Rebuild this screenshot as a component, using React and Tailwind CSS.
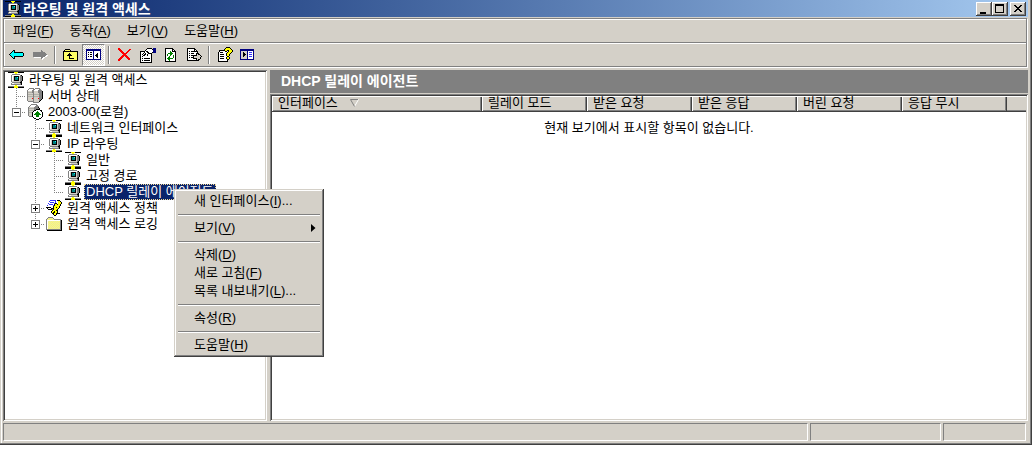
import React from "react";

const INK = {
  k: "#000000", d: "#606060", g: "#808080", s: "#b0b0a8", l: "#d4d0c8", w: "#ffffff",
  y: "#ffff00", o: "#ffff66", p: "#e8e4b0", t: "#008080", c: "#00ffff", r: "#ff0000", n: "#008000",
  b: "#000080", u: "#6688cc", m: "#3333ff",
};

const ICONS = {
  network: [
    "kkkkkkyyyykkkkkk",
    ".......yy.......",
    "....gggggggg....",
    "...gwwwwwwwwgk..",
    "...gwlkkkkklggk.",
    "...gwlkttcklggk.",
    "...gwlktttklggk.",
    "...gwlktttklggk.",
    "...gwlkkkkklggk.",
    "...gllllllllgk..",
    "....ggggggggkk..",
    "...gwwllllllgk..",
    "...ggggggggggk..",
    ".......yy.......",
    "ggggggyyyygggggg",
    "kkkkkkyyyykkkkkk",
  ],
  servers: [
    "..ggggg.ggggg...",
    ".gwwwwggwwwwgg..",
    "gwwwwggwwwwgggg.",
    "gllllggllllggggk",
    "gssssggllllggggk",
    "glllllglllllgggk",
    "gsssssgsssssgggk",
    "glllllglllllgggk",
    "gsssssgsssssgggk",
    "glllllglllllgggk",
    "gllllrgllllrgggk",
    "glllllglllllggk.",
    "glllllglllllgk..",
    ".gggggglllllk...",
    "......gggggg....",
    "................",
  ],
  server: [
    "....gggggg......",
    "...gwwwwwgg.....",
    "..gwwwwwgggg....",
    ".glllllggggk....",
    ".gsssssgggggk...",
    ".glllllggkkkk...",
    ".gssssskkwwwwkk.",
    ".gllllkwwwnwwwk.",
    ".gssskwwwnnnwwwk",
    ".glllkwwnnnnnwwk",
    ".glllkwnnnnnnnwk",
    ".glllkwwwnnnwwwk",
    "..gggkwwwnnnwwwk",
    "......kwwwwwwwk.",
    ".......kkwwwkk..",
    ".........kkk....",
  ],
  policy: [
    "....mmmmmm.kkk..",
    "...mwwwwwm..yyk.",
    "...wmmmmwm..yyyk",
    "..mwwwwwmkk.yyyk",
    "..wmmmmwkyykyyk.",
    ".mwwwwwmkyyyyyk.",
    ".wwwwwwkyyyyyk..",
    "kkkkkwwkyykyyk..",
    ".kwwwkkkyyyyk...",
    "..kkkkgkyyyk....",
    "......kyyykk....",
    ".....kyykyyk....",
    ".....kykkyyk....",
    "......kkyykkkk..",
    ".......kyyk.....",
    "........kk......",
  ],
  folder: [
    "................",
    "..ggggg.........",
    ".gpopopg........",
    "gpopopopggggggg.",
    "gwwwwwwwwwwwwwgk",
    "gwpopopopopopogk",
    "gwopopopopopopgk",
    "gwpopopopopopogk",
    "gwopopopopopopgk",
    "gwpopopopopopogk",
    "gwopopopopopopgk",
    "gwpopopopopopogk",
    "gwopopopopopopgk",
    "gggggggggggggggk",
    ".kkkkkkkkkkkkkkk",
    "................",
  ],
  back: [
    "................",
    "................",
    "................",
    "....kk..........",
    "...kck..........",
    "..kcckkkkkkkkk..",
    ".kcccccccccccck.",
    "kccccccccccccck.",
    ".kcccccccccccck.",
    "..kcckkkkkkkkk..",
    "...kck..........",
    "....kk..........",
    "................",
    "................",
    "................",
    "................",
  ],
  forward: [
    "................",
    "................",
    "................",
    ".........g......",
    ".........gg.....",
    ".gggggggggggg...",
    ".ggggggggggggg..",
    ".gggggggggggggg.",
    ".gggggggggggggww",
    ".ggggggggggggww.",
    "..wwwwwwwggww...",
    ".........gww....",
    "..........w.....",
    "................",
    "................",
    "................",
  ],
  up: [
    "................",
    "................",
    "..kkkkk.........",
    ".koooook........",
    "kkkkkkkkkkkkkkk.",
    "koooooooooooook.",
    "koooookoooooook.",
    "kooookkkooooook.",
    "koookkkkkoooook.",
    "koooookoooooook.",
    "koooookoooooook.",
    "koooookkkkkoook.",
    "koooooooooooook.",
    "kkkkkkkkkkkkkkk.",
    "................",
    "................",
  ],
  tree: [
    "................",
    "................",
    "bbbbbbbbbbbbbbb.",
    "bbbbbbbbbbbbbbb.",
    "bwwwwwwbwwwwwwb.",
    "bwkwkkwbwwwwwwb.",
    "bwwwwwwbwwwkwwb.",
    "bwkwkkwbwwkkwwb.",
    "bwwwwwwbwkkkwwb.",
    "bwkwkkwbwwkkwwb.",
    "bwwwwwwbwwwkwwb.",
    "bwwwwwwbwwwwwwb.",
    "bbbbbbbbbbbbbbb.",
    "................",
    "................",
    "................",
  ],
  action: [
    "................",
    "................",
    "bbbbbbbbbbbbbb..",
    "bbbbbbbbbbbbbb..",
    "bllllllbwwwwwb..",
    "bllklllbwmmmwb..",
    "bllkkllbwwwwwb..",
    "bllkkklbwmmmwb..",
    "bllkkllbwwwwwb..",
    "bllklllbwmmmwb..",
    "bllllllbwwwwwb..",
    "bllllllbwwwwwb..",
    "bbbbbbbbbbbbbb..",
    "................",
    "................",
    "................",
  ],
  remove: [
    "................",
    ".rr.............",
    ".rrr........rr..",
    "..rrr......rr...",
    "...rrr....rr....",
    "....rrr..rr.....",
    ".....rrrrr......",
    "......rrr.......",
    ".....rrrrr......",
    "....rrr.rrr.....",
    "...rrr...rrr....",
    "..rrr.....rrr...",
    ".rrr.......rr...",
    ".rr.............",
    "................",
    "................",
  ],
  props: [
    "................",
    ".......kkkkk.bbb",
    "......kwwwwwkbbb",
    ".....kwwwwwwwbbb",
    "kkkkkwkkwwwwwbbb",
    "kwwwkwwkkwwwkbbb",
    "kwwkwkwwkkkk....",
    "kwkwkkwkwwwk....",
    "kwwkkwwkwwwk....",
    "kwkwwwwwwwwk....",
    "kwwwwwwwwwwk....",
    "kwkwkkkkkkwk....",
    "kwwwwwwwwwwk....",
    "kwkwkkkkkkwk....",
    "kwwwwwwwwwwk....",
    "kkkkkkkkkkkk....",
  ],
  refresh: [
    "................",
    "..kkkkkkkk......",
    "..kwwwwwwkk.....",
    "..kwwwwwwkwk....",
    "..kwwwwnwkkkk...",
    "..kwwwwnnwwwk...",
    "..kwwnnnnnwwk...",
    "..kwnwwnnwwwk...",
    "..kwnwwnwwnwk...",
    "..kwwwnwwwnwk...",
    "..kwwnnwwwnwk...",
    "..kwnnnnnnwwk...",
    "..kwwnnwwwwwk...",
    "..kwwwnwwwwwk...",
    "..kkkkkkkkkkk...",
    "................",
  ],
  export: [
    "................",
    ".kkkkkkkk.......",
    ".kwwwwwwkk......",
    ".kwwwwwwkwk.....",
    ".kwkwkkkkkkk....",
    ".kwwwwwwwwwk....",
    ".kwkwkkkwwkkk...",
    ".kwwwwwwwwklkk..",
    ".kwkwkkkkkklllk.",
    ".kwwwwwklllllllk",
    ".kwkwkkkllllllk.",
    ".kwwwwwkkkklllk.",
    ".kwwwwwwwwklkk..",
    ".kkkkkkkkkkkk...",
    "................",
    "................",
  ],
  help: [
    ".........kkkk...",
    "........kyyyyk..",
    ".......kyyyyyyk.",
    "..kkkkkkyykkyyyk",
    "..kwwwwwkkwkyyyk",
    ".kwkkkwwwwkyyyk.",
    ".kwwwwwwwkyyyk..",
    ".kwkkkkwwkyyk...",
    ".kwwwwwwwkyyk...",
    ".kwkkkkwwwkk....",
    ".kwwwwwwwkyyk...",
    ".kwkkkkwwkyyk...",
    ".kwwwwwwwwkk....",
    ".kwwwwwwwwk.....",
    ".kkkkkkkkkk.....",
    "................",
  ],
};

function PixelIcon({ name }) {
  const marks = [];
  ICONS[name].forEach((line, y) => {
    let x = 0;
    while (x < line.length) {
      let end = x + 1;
      while (end < line.length && line[end] === line[x]) end++;
      if (INK[line[x]]) {
        marks.push(<rect key={`${x}-${y}`} x={x} y={y} width={end - x} height="1" fill={INK[line[x]]} />);
      }
      x = end;
    }
  });
  return (
    <svg viewBox="0 0 16 16" className="block h-4 w-4 shrink-0" shapeRendering="crispEdges" aria-hidden="true">
      {marks}
    </svg>
  );
}

/* One 19px column of the tree: none, line, tee, end, with an optional plus/minus box. */
function Branch({ kind }) {
  const [shape, box] = kind.split(":");
  const dots = { stroke: "#808080", strokeWidth: 1, strokeDasharray: "1 1" };
  return (
    <svg viewBox="0 0 19 16" className="block h-4 w-[19px] shrink-0" shapeRendering="crispEdges" aria-hidden="true">
      {(shape === "line" || shape === "tee") && <path d="M9.5 0V16" {...dots} />}
      {shape === "end" && <path d="M9.5 0V8" {...dots} />}
      {(shape === "tee" || shape === "end") && <path d="M9 8.5H19" {...dots} />}
      {box && (
        <>
          <rect x="5.5" y="4.5" width="8" height="8" fill="#fff" stroke="#808080" />
          <path d={box === "plus" ? "M7 8.5H12M9.5 6V11" : "M7 8.5H12"} stroke="#000" />
        </>
      )}
    </svg>
  );
}

const TREE = [
  { branches: [], icon: "network", label: "라우팅 및 원격 액세스" },
  { branches: ["tee"], icon: "servers", label: "서버 상태" },
  { branches: ["end:minus"], icon: "server", label: "2003-00(로컬)" },
  { branches: ["none", "tee"], icon: "network", label: "네트워크 인터페이스" },
  { branches: ["none", "tee:minus"], icon: "network", label: "IP 라우팅" },
  { branches: ["none", "line", "tee"], icon: "network", label: "일반" },
  { branches: ["none", "line", "tee"], icon: "network", label: "고정 경로" },
  { branches: ["none", "line", "end"], icon: "network", label: "DHCP 릴레이 에이전트", selected: true },
  { branches: ["none", "tee:plus"], icon: "policy", label: "원격 액세스 정책" },
  { branches: ["none", "end:plus"], icon: "folder", label: "원격 액세스 로깅" },
];

const MENUS = [["파일", "F"], ["동작", "A"], ["보기", "V"], ["도움말", "H"]];

const TOOLS = [
  [["back", "뒤로"], ["forward", "앞으로"]],
  [["up", "한 수준 위로"], ["tree", "콘솔 트리 표시"]],
  [["remove", "삭제"], ["props", "속성"], ["refresh", "새로 고침"], ["export", "목록 내보내기"]],
  [["help", "도움말"], ["action", "작업 창 표시"]],
];

const CONTEXT = [
  [["새 인터페이스", "I", "..."]],
  [["보기", "V", "", true]],
  [["삭제", "D", ""], ["새로 고침", "F", ""], ["목록 내보내기", "L", "..."]],
  [["속성", "R", ""]],
  [["도움말", "H", ""]],
];

const COLUMNS = ["릴레이 모드", "받은 요청", "받은 응답", "버린 요청", "응답 무시"];

const SUNKEN =
  "bg-white p-0.5 shadow-[inset_1px_1px_#808080,inset_-1px_-1px_#fff,inset_2px_2px_#404040,inset_-2px_-2px_#d4d0c8]";
const CAPTION_BUTTON =
  "flex h-[14px] w-4 items-center justify-center bg-[#d4d0c8] shadow-[inset_-1px_-1px_#404040,inset_1px_1px_#fff,inset_-2px_-2px_#808080]";
const HEAD =
  "h-4 bg-[#d4d0c8] p-0 pl-1.5 text-left align-top font-normal leading-[14px] shadow-[inset_0_-1px_#404040,inset_1px_1px_#fff,inset_-1px_0_#404040,inset_-2px_-2px_#808080]";
const STATUS = "h-[18px] border border-[#808080] border-r-white border-b-white";

function Hotkey({ text, letter, tail }) {
  return (
    <span>
      {text}(<span className="underline underline-offset-2">{letter}</span>){tail}
    </span>
  );
}

function TitleBar() {
  return (
    <header className="flex h-[17px] items-center bg-linear-to-r from-[#0a246a] to-[#a6caf0] pr-0.5 pl-0.5 text-white">
      <PixelIcon name="network" />
      <h1 className="ml-0.5 flex-1 text-[14px] leading-4 font-bold whitespace-nowrap">라우팅 및 원격 액세스</h1>
      <div className="flex text-black">
        <button className={CAPTION_BUTTON} aria-label="최소화">
          <svg viewBox="0 0 16 14" className="h-[14px] w-4" shapeRendering="crispEdges"><path d="M4 10h6v2H4z" /></svg>
        </button>
        <button className={CAPTION_BUTTON} aria-label="최대화">
          <svg viewBox="0 0 16 14" className="h-[14px] w-4" shapeRendering="crispEdges">
            <path fillRule="evenodd" d="M3 2h9v9H3zM4 4v6h7V4z" />
          </svg>
        </button>
        <button className={`${CAPTION_BUTTON} ml-0.5`} aria-label="닫기">
          <svg viewBox="0 0 16 14" className="h-[14px] w-4" shapeRendering="crispEdges">
            <path d="M4 3h2v1h1v1h2v-1h1v-1h2v1h-1v1h-1v1h-1v1h1v1h1v1h1v1h-2v-1h-1v-1H7v1H6v1H4v-1h1v-1h1v-1h1v-1H6v-1H5v-1H4z" />
          </svg>
        </button>
      </div>
    </header>
  );
}

function Toolbar() {
  return (
    <div role="toolbar" className="flex h-[22px] items-center">
      {TOOLS.map((group, i) => (
        <React.Fragment key={i}>
          {i > 0 && <span className="mx-[3px] h-[18px] w-0.5 border-l border-[#808080] bg-white" />}
          {group.map(([icon, label]) => (
            <button
              key={icon}
              aria-label={label}
              className={`flex h-[22px] w-[23px] items-center justify-center ${
                icon === "tree"
                  ? "border border-[#808080] border-r-white border-b-white bg-[conic-gradient(#fff_25%,#d4d0c8_0_50%,#fff_0_75%,#d4d0c8_0)] bg-[length:2px_2px]"
                  : ""
              }`}
            >
              <PixelIcon name={icon} />
            </button>
          ))}
        </React.Fragment>
      ))}
    </div>
  );
}

function ConsoleTree() {
  return (
    <nav className={`w-[264px] shrink-0 overflow-hidden ${SUNKEN}`}>
      <ul role="tree" className="pl-0.5">
        {TREE.map((node) => (
          <li
            key={node.label}
            role="treeitem"
            aria-level={node.branches.length + 1}
            aria-selected={Boolean(node.selected)}
            className="flex h-4 items-center"
          >
            {node.branches.map((kind, i) => <Branch key={i} kind={kind} />)}
            <span className="ml-px"><PixelIcon name={node.icon} /></span>
            <span
              className={`ml-[3px] h-4 border px-px leading-[14px] whitespace-nowrap ${
                node.selected ? "border-dotted border-[#f5db95] bg-[#0a246a] text-white" : "border-transparent"
              }`}
            >
              {node.label}
            </span>
          </li>
        ))}
      </ul>
    </nav>
  );
}

function ResultPane() {
  return (
    <main className="flex min-w-0 flex-1 flex-col">
      <h2 className="h-[23px] bg-[#808080] pl-[11px] text-[14px] leading-[23px] font-bold text-white">
        DHCP 릴레이 에이전트
      </h2>
      <div className={`mt-px flex-1 ${SUNKEN}`}>
        <table className="w-full table-fixed border-separate border-spacing-0">
          <thead>
            <tr>
              <th className={`${HEAD} w-[210px]`}>
                <span className="flex items-center gap-3">
                  인터페이스
                  <svg viewBox="0 0 9 8" className="h-2 w-[9px]" aria-hidden="true">
                    <path d="M8.5 .5L4.5 7.5" stroke="#fff" />
                    <path d="M8 .5H.5L4.5 7.5" stroke="#808080" fill="none" />
                  </svg>
                </span>
              </th>
              {COLUMNS.map((name) => (
                <th key={name} className={`${HEAD} w-[105px]`}>{name}</th>
              ))}
              <th className="bg-[#d4d0c8] p-0 shadow-[inset_0_-1px_#404040,inset_0_1px_#fff,inset_0_-2px_#808080]" />
            </tr>
          </thead>
          <tbody>
            <tr>
              <td colSpan={7} className="p-0 pt-2 text-center leading-4">현재 보기에서 표시할 항목이 없습니다.</td>
            </tr>
          </tbody>
        </table>
      </div>
    </main>
  );
}

function ContextMenu() {
  return (
    <div
      role="menu"
      className="absolute top-[189px] left-[174px] w-[150px] bg-[#d4d0c8] p-[3px] shadow-[inset_-1px_-1px_#404040,inset_1px_1px_#d4d0c8,inset_-2px_-2px_#808080,inset_2px_2px_#fff]"
    >
      {CONTEXT.map((group, i) => (
        <React.Fragment key={i}>
          {i > 0 && (
            <div role="separator" className="flex h-[9px] flex-col justify-center px-px">
              <div className="h-0.5 border-t border-[#808080] bg-white" />
            </div>
          )}
          {group.map(([text, letter, tail, more]) => (
            <button
              key={text}
              role="menuitem"
              className="flex h-[18px] w-full items-center justify-between pr-[5px] pl-[17px] leading-[18px] whitespace-nowrap"
            >
              <Hotkey text={text} letter={letter} tail={tail} />
              {more && (
                <svg viewBox="0 0 5 8" className="h-2 w-[5px]" aria-hidden="true"><path d="M0 0L4.5 4L0 8Z" /></svg>
              )}
            </button>
          ))}
        </React.Fragment>
      ))}
    </div>
  );
}

export default function App() {
  return (
    <div className="relative flex min-h-screen bg-white pr-0.5 pb-1 font-['Liberation_Sans','Noto_Sans_CJK_KR',sans-serif] text-[13px] text-black">
      <div className="flex min-w-0 flex-1 flex-col bg-[#d4d0c8] pr-1 pb-1 pl-[3px] shadow-[inset_-1px_-1px_#404040,inset_-2px_-2px_#808080,inset_1px_0_#d4d0c8,inset_2px_0_#fff]">
        <TitleBar />
        <div className="mt-px mr-px border border-[#808080] shadow-[1px_1px_#fff,inset_1px_1px_#fff]">
          <nav role="menubar" className="mt-px flex h-[22px] items-center gap-4 pl-[9px]">
            {MENUS.map(([text, letter]) => (
              <button key={text} role="menuitem" className="leading-[22px] whitespace-nowrap">
                <Hotkey text={text} letter={letter} />
              </button>
            ))}
          </nav>
          <div className="border-t border-[#808080]">
            <div className="border-t border-white pl-px">
              <Toolbar />
            </div>
          </div>
        </div>
        <div className="mt-[3px] flex flex-1 gap-[3px]">
          <ConsoleTree />
          <ResultPane />
        </div>
        <footer className="mt-0.5 flex gap-0.5 pr-0.5">
          <div className={`${STATUS} flex-1`} />
          <div className={`${STATUS} w-[131px]`} />
          <div className={`${STATUS} w-[83px]`} />
        </footer>
      </div>
      <ContextMenu />
    </div>
  );
}
